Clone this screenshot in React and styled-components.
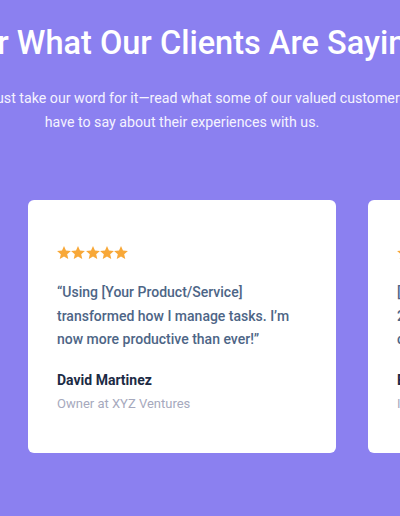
import React from 'react';
import styled, { createGlobalStyle } from 'styled-components';

const GlobalStyle = createGlobalStyle`
  html, body {
    margin: 0;
    padding: 0;
    background: #8b80f0;
    overflow: hidden;
  }
  body {
    font-family: Roboto, "Liberation Sans", Arial, sans-serif;
    -webkit-font-smoothing: antialiased;
  }
`;

const Section = styled.section`
  min-height: 516px;
  padding-top: 23px;
  background: #8b80f0;
  box-sizing: border-box;
`;

const Header = styled.div`
  width: 308px;
  margin-left: 28px;
  display: flex;
  flex-direction: column;
  align-items: center;
`;

const Title = styled.h2`
  margin: 0;
  font-size: 32.5px;
  line-height: 40px;
  font-weight: 500;
  color: #ffffff;
  white-space: nowrap;
`;

const Subtitle = styled.p`
  margin: 23px 0 0;
  width: 460px;
  flex-shrink: 0;
  font-size: 14.2px;
  line-height: 24px;
  font-weight: 400;
  color: #f5f3ff;
  text-align: center;
`;

const Track = styled.div`
  display: flex;
  gap: 32px;
  margin-top: 66px;
  padding-left: 28px;
`;

const Card = styled.div`
  flex-shrink: 0;
  width: 308px;
  height: 253px;
  box-sizing: border-box;
  padding: 46px 29px 0;
  background: #ffffff;
  border-radius: 6px;
`;

const Stars = styled.div`
  display: flex;
  gap: 0.3px;
  height: 14px;
`;

const Quote = styled.p`
  margin: 21px 0 0;
  font-size: 14px;
  line-height: 23.5px;
  font-weight: 500;
  color: #4d6586;
`;

const Name = styled.div`
  margin-top: 18px;
  font-size: 14px;
  line-height: 20px;
  font-weight: 700;
  color: #1c2b45;
`;

const Role = styled.div`
  margin-top: 4px;
  font-size: 13px;
  line-height: 20px;
  color: #a6a9bd;
`;

const Star = () => (
  <svg width="14" height="13.2" viewBox="1 0.5 22 20.7">
    <path
      fill="#f8a838"
      d="M12 0.5l3.1 7.1 7.8 0.7-5.9 5.1 1.7 7.6L12 17.1l-6.7 3.9 1.7-7.6-5.9-5.1 7.8-0.7z"
    />
  </svg>
);

const testimonials = [
  {
    quote: '“Using [Your Product/Service] transformed how I manage tasks. I’m now more productive than ever!”',
    name: 'David Martinez',
    role: 'Owner at XYZ Ventures',
  },
  {
    quote: '[Your Product/Service] saved us hours. 24/7 support keeps our whole team connected and productive.',
    name: 'Brian Thompson',
    role: 'IT Manager at Nexus Corp',
  },
];

const App = () => (
  <>
    <GlobalStyle />
    <Section>
      <Header>
        <Title>Hear What Our Clients Are Saying</Title>
        <Subtitle>
          Don’t just take our word for it—read what some of our valued customers have to say about their experiences with us.
        </Subtitle>
      </Header>
      <Track>
        {testimonials.map((t) => (
          <Card key={t.name}>
            <Stars>
              {[0, 1, 2, 3, 4].map((i) => <Star key={i} />)}
            </Stars>
            <Quote>{t.quote}</Quote>
            <Name>{t.name}</Name>
            <Role>{t.role}</Role>
          </Card>
        ))}
      </Track>
    </Section>
  </>
);

export default App;
